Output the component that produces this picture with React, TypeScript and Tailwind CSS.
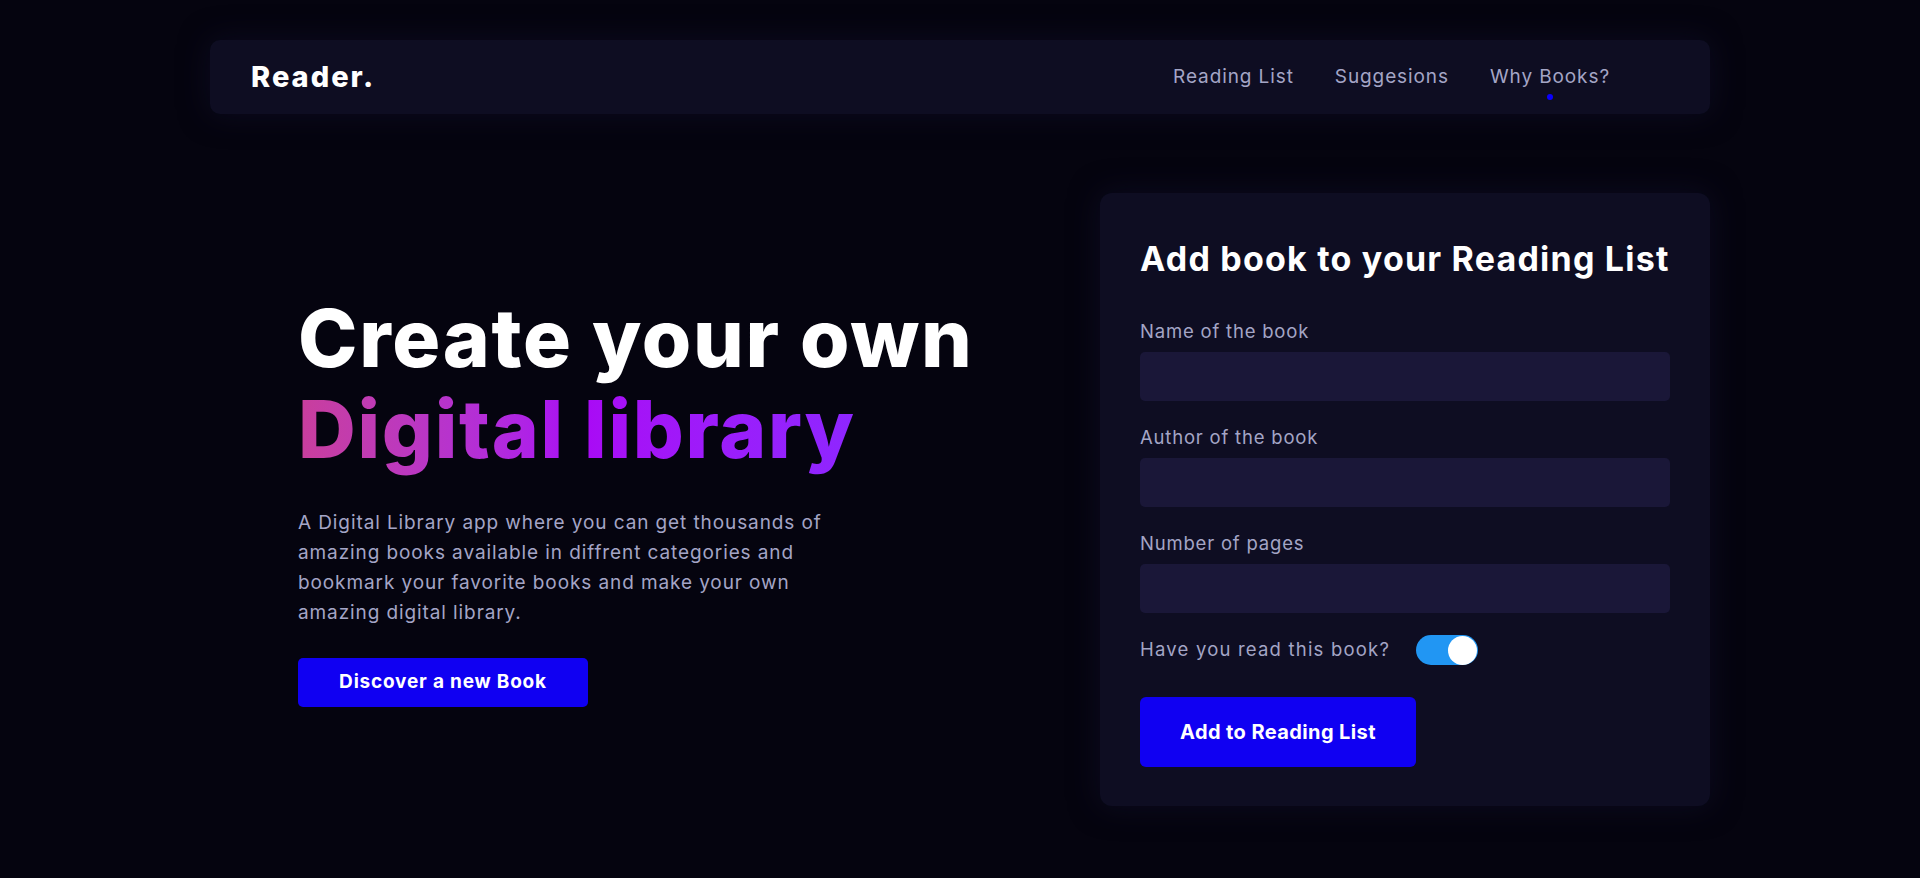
const body = { fontFamily: "Inter, 'Noto Sans', sans-serif" };

function Field({ label }: { label: string }) {
  return (
    <div className="flex flex-col">
      <label className="text-[18.5px] leading-[28px] tracking-[0.8px] text-[#a4a5c6]">{label}</label>
      <input
        type="text"
        className="mt-[7px] h-[49px] w-full rounded-[5px] bg-[#1a1738] px-4 text-white outline-none"
      />
    </div>
  );
}

export default function App() {
  return (
    <div className="min-h-screen bg-[#05040f] pt-[40px]" style={body}>
      <div className="mx-auto w-[1500px]">
        <nav className="flex h-[74px] items-center justify-between rounded-[10px] bg-[#0e0d22] pl-[41px] pr-[100px] shadow-[0_0_30px_rgba(16,14,40,0.7)]">
          <span className="text-[29px] font-extrabold tracking-[2px] text-white">Reader.</span>
          <ul className="flex items-center gap-[41px] text-[19px] tracking-[0.9px] text-[#a4a5c6]">
            <li>Reading List</li>
            <li>Suggesions</li>
            <li className="relative">
              Why Books?
              <span className="absolute left-1/2 top-[31px] h-[6px] w-[6px] -translate-x-1/2 rounded-full bg-[#0a00ff]" />
            </li>
          </ul>
        </nav>

        <main className="mt-[79px] flex items-center justify-between">
          <section className="pl-[88px]">
            <h1 className="text-[80px] font-extrabold leading-[91px] tracking-[1.7px] text-white">
              Create your own
              <br />
              <span className="bg-gradient-to-r from-[#c93e9c] via-[#aa08f5] to-[#8e26ff] bg-clip-text text-transparent">
                Digital library
              </span>
            </h1>
            <p className="mt-[34px] w-[545px] text-[19px] leading-[30px] tracking-[0.9px] text-[#a4a5c6]">
              A Digital Library app where you can get thousands of amazing books available in diffrent
              categories and bookmark your favorite books and make your own amazing digital library.
            </p>
            <button className="mt-[30px] h-[49px] w-[290px] rounded-[5px] bg-[#1000f2] text-[19px] font-bold tracking-[0.8px] text-white">
              Discover a new Book
            </button>
          </section>

          <section className="w-[610px] rounded-[12px] bg-[#0e0d22] px-[40px] pb-[39px] pt-[40px] shadow-[0_0_30px_rgba(16,14,40,0.7)]">
            <h2 className="text-[34px] font-bold leading-[52px] tracking-[1.2px] text-white">
              Add book to your Reading List
            </h2>
            <form className="mt-[32px] flex flex-col gap-[22px]">
              <Field label="Name of the book" />
              <Field label="Author of the book" />
              <Field label="Number of pages" />
              <div className="flex items-center gap-[26px]">
                <span className="text-[18.5px] tracking-[1.2px] text-[#a4a5c6]">Have you read this book?</span>
                <div className="flex h-[30px] w-[62px] items-center justify-end rounded-full bg-[#2196f3] pr-[1px]">
                  <div className="h-[29px] w-[29px] rounded-full bg-white" />
                </div>
              </div>
              <button
                type="button"
                className="mt-[10px] h-[70px] w-[276px] rounded-[6px] bg-[#1000f2] text-[20px] font-bold tracking-[0.4px] text-white"
              >
                Add to Reading List
              </button>
            </form>
          </section>
        </main>
      </div>
    </div>
  );
}
